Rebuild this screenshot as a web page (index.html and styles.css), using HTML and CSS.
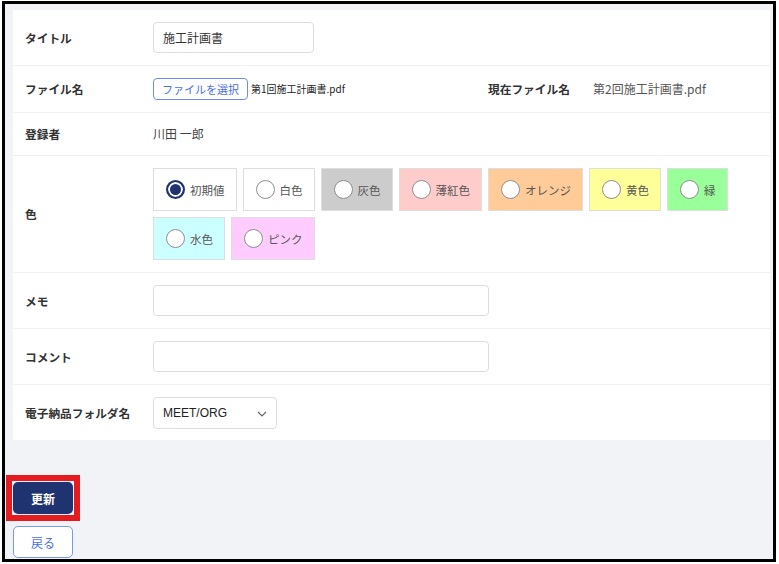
FILE: index.html
```html
<!DOCTYPE html>
<html lang="ja">
<head>
    <meta charset="UTF-8">
    <title>施工計画書 編集</title>
    <link rel="stylesheet" href="styles.css">
</head>
<body>
    <div class="frame">
        <div class="panel">
            <div class="row">
                <div class="label">タイトル</div>
                <div class="value">
                    <input type="text" class="text-input title-input" value="施工計画書">
                </div>
            </div>
            <div class="row">
                <div class="label">ファイル名</div>
                <div class="value file-value">
                    <div class="file-pick">
                        <label class="file-button">ファイルを選択<input type="file" class="file-hidden"></label>
                        <span class="file-name">第1回施工計画書.pdf</span>
                    </div>
                    <div class="label current-label">現在ファイル名</div>
                    <div class="current-name">第2回施工計画書.pdf</div>
                </div>
            </div>
            <div class="row">
                <div class="label">登録者</div>
                <div class="value plain">川田 一郎</div>
            </div>
            <div class="row">
                <div class="label">色</div>
                <div class="value colors">
                    <label class="color-box"><input type="radio" name="color" checked><span>初期値</span></label>
                    <label class="color-box"><input type="radio" name="color"><span>白色</span></label>
                    <label class="color-box c-gray"><input type="radio" name="color"><span>灰色</span></label>
                    <label class="color-box c-pink"><input type="radio" name="color"><span>薄紅色</span></label>
                    <label class="color-box c-orange"><input type="radio" name="color"><span>オレンジ</span></label>
                    <label class="color-box c-yellow"><input type="radio" name="color"><span>黄色</span></label>
                    <label class="color-box c-green"><input type="radio" name="color"><span>緑</span></label>
                    <label class="color-box c-aqua"><input type="radio" name="color"><span>水色</span></label>
                    <label class="color-box c-magenta"><input type="radio" name="color"><span>ピンク</span></label>
                </div>
            </div>
            <div class="row">
                <div class="label">メモ</div>
                <div class="value">
                    <input type="text" class="text-input wide-input">
                </div>
            </div>
            <div class="row">
                <div class="label">コメント</div>
                <div class="value">
                    <input type="text" class="text-input wide-input">
                </div>
            </div>
            <div class="row last">
                <div class="label">電子納品フォルダ名</div>
                <div class="value">
                    <div class="select-wrap">
                        <select class="folder-select">
                            <option>MEET/ORG</option>
                        </select>
                        <svg class="chevron" width="10" height="6" viewBox="0 0 10 6">
                            <path d="M1 1 L5 5 L9 1" fill="none" stroke="#666" stroke-width="1.2"/>
                        </svg>
                    </div>
                </div>
            </div>
        </div>

        <div class="actions">
            <span class="marker"><button class="btn btn-primary">更新</button></span>
            <button class="btn btn-outline">戻る</button>
        </div>
    </div>
</body>
</html>
```

FILE: styles.css
```css
body {
    margin: 0;
    font-family: "Noto Sans CJK JP", "Noto Sans", sans-serif;
    background-color: #fff;
    color: #333;
}
.frame {
    margin: 1px 3px 0 2px;
    height: 549px;
    border: 3px solid #000;
    background-color: #f2f3f7;
    padding: 6px 3px 0 8px;
    display: flex;
    flex-direction: column;
}
.panel {
    background-color: #fff;
}
.row {
    display: grid;
    grid-template-columns: 128px 1fr;
    align-items: center;
    padding: 12px 0 12px 12px;
    border-bottom: 1px solid #f0f1f4;
    line-height: 18px;
}
.row.last {
    border-bottom: none;
    padding-bottom: 11px;
}
.label {
    font-size: 11.7px;
    font-weight: bold;
    color: #333;
}
.value {
    font-size: 12px;
    color: #444;
}
.text-input {
    box-sizing: border-box;
    border: 1px solid #dcdde2;
    border-radius: 4px;
    font-family: inherit;
    font-size: 12px;
    color: #333;
    padding: 0 9px;
    display: block;
}
.title-input {
    width: 161px;
    height: 31px;
}
.wide-input {
    width: 336px;
    height: 31px;
}
.file-value {
    display: flex;
    align-items: center;
}
.file-pick {
    width: 335px;
    display: flex;
    align-items: center;
    gap: 3px;
}
.file-button {
    box-sizing: border-box;
    height: 22px;
    padding: 0 8px;
    border: 1px solid #6d8cf0;
    border-radius: 4px;
    color: #4c6ee8;
    font-size: 11px;
    line-height: 20px;
    cursor: pointer;
}
.file-hidden {
    display: none;
}
.file-name {
    font-size: 10px;
    color: #222;
}
.current-label {
    width: 105px;
}
.current-name {
    font-size: 12px;
    color: #555;
}
.colors {
    display: flex;
    flex-wrap: wrap;
    gap: 6px;
    width: 600px;
}
.color-box {
    box-sizing: border-box;
    height: 43px;
    padding: 0 11px 0 12px;
    border: 1px solid #dedede;
    display: flex;
    align-items: center;
    gap: 5px;
    font-size: 11.5px;
    color: #555;
    background-color: #fff;
    cursor: pointer;
}
.color-box input {
    appearance: none;
    margin: 0;
    width: 19px;
    height: 19px;
    border: 1px solid #8d8d8d;
    border-radius: 50%;
    background-color: #fff;
}
.color-box input:checked {
    border: 2px solid #1f3370;
    background-color: #1f3370;
    box-shadow: inset 0 0 0 2px #fff;
}
.c-gray { background-color: #cccccc; }
.c-pink { background-color: #ffcccc; }
.c-orange { background-color: #ffcc99; }
.c-yellow { background-color: #ffff99; }
.c-green { background-color: #99ff99; }
.c-aqua { background-color: #ccffff; }
.c-magenta { background-color: #ffccff; }

.select-wrap {
    position: relative;
    width: 124px;
}
.folder-select {
    appearance: none;
    display: block;
    width: 124px;
    height: 32px;
    border: 1px solid #dcdde2;
    border-radius: 4px;
    background-color: #fff;
    font-family: "Liberation Sans", Arial, sans-serif;
    font-size: 12px;
    color: #222;
    padding: 0 9px;
}
.chevron {
    position: absolute;
    right: 10px;
    top: 14px;
}
.actions {
    margin-top: 42px;
    display: flex;
    flex-direction: column;
    align-items: flex-start;
    gap: 12px;
}
.marker {
    display: block;
    outline: 6px solid #e41b1f;
    outline-offset: 1px;
}
.btn {
    display: block;
    box-sizing: border-box;
    width: 60px;
    height: 32px;
    border-radius: 5px;
    font-family: inherit;
    font-size: 12px;
    cursor: pointer;
}
.btn-primary {
    background-color: #1f3370;
    color: #fff;
    border: none;
    font-weight: bold;
}
.btn-outline {
    background-color: #fff;
    color: #4c6ee8;
    border: 1px solid #7b98f0;
}
```
